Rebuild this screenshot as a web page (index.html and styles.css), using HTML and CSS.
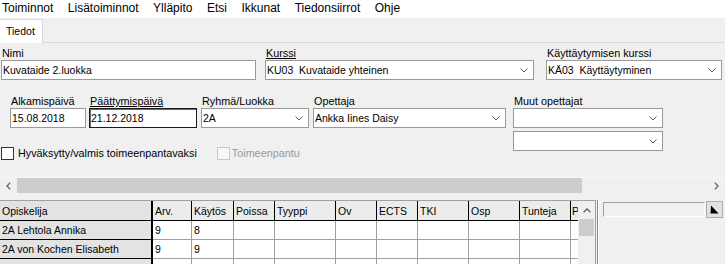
FILE: index.html
```html
<!DOCTYPE html>
<html>
<head>
<meta charset="utf-8">
<link rel="stylesheet" href="styles.css">
</head>
<body>
<div class="menubar">
  <span>Toiminnot</span><span>Lisätoiminnot</span><span>Ylläpito</span><span>Etsi</span><span>Ikkunat</span><span>Tiedonsiirrot</span><span>Ohje</span>
</div>
<div class="tabbar">
  <div class="tab">Tiedot</div>
  <div class="tabfill"></div>
</div>
<div class="form">
  <div class="row1">
    <div class="field f-nimi">
      <div class="lbl">Nimi</div>
      <div class="input">Kuvataide 2.luokka</div>
    </div>
    <div class="field f-kurssi">
      <div class="lbl"><u>Kurssi</u></div>
      <div class="combo"><span class="ctext">KU03  Kuvataide yhteinen</span><svg class="chev" width="8" height="5" viewBox="0 0 8 5"><path d="M0.5 0.5 L4 4 L7.5 0.5" fill="none" stroke="#5a5a5a" stroke-width="1"/></svg></div>
    </div>
    <div class="field f-kay">
      <div class="lbl">Käyttäytymisen kurssi</div>
      <div class="combo"><span class="ctext">KÄ03  Käyttäytyminen</span><svg class="chev" width="8" height="5" viewBox="0 0 8 5"><path d="M0.5 0.5 L4 4 L7.5 0.5" fill="none" stroke="#5a5a5a" stroke-width="1"/></svg></div>
    </div>
  </div>
  <div class="row2">
    <div class="left">
      <div class="fields">
        <div class="field f-alk">
          <div class="lbl">Alkamispäivä</div>
          <div class="input">15.08.2018</div>
        </div>
        <div class="field f-paat">
          <div class="lbl"><u>Päättymispäivä</u></div>
          <div class="input focus">21.12.2018</div>
        </div>
        <div class="field f-ryh">
          <div class="lbl">Ryhmä/Luokka</div>
          <div class="combo"><span class="ctext">2A</span><svg class="chev" width="8" height="5" viewBox="0 0 8 5"><path d="M0.5 0.5 L4 4 L7.5 0.5" fill="none" stroke="#5a5a5a" stroke-width="1"/></svg></div>
        </div>
        <div class="field f-ope">
          <div class="lbl">Opettaja</div>
          <div class="combo"><span class="ctext">Ankka Iines Daisy</span><svg class="chev" width="8" height="5" viewBox="0 0 8 5"><path d="M0.5 0.5 L4 4 L7.5 0.5" fill="none" stroke="#5a5a5a" stroke-width="1"/></svg></div>
        </div>
      </div>
      <div class="checks">
        <span class="cb"></span><span class="cbl">Hyväksytty/valmis toimeenpantavaksi</span>
        <span class="cb dis"></span><span class="cbl dis">Toimeenpantu</span>
      </div>
    </div>
    <div class="field f-muut">
      <div class="lbl">Muut opettajat</div>
      <div class="combo"><span class="ctext"></span><svg class="chev" width="8" height="5" viewBox="0 0 8 5"><path d="M0.5 0.5 L4 4 L7.5 0.5" fill="none" stroke="#5a5a5a" stroke-width="1"/></svg></div>
      <div class="combo second"><span class="ctext"></span><svg class="chev" width="8" height="5" viewBox="0 0 8 5"><path d="M0.5 0.5 L4 4 L7.5 0.5" fill="none" stroke="#5a5a5a" stroke-width="1"/></svg></div>
    </div>
  </div>
</div>
<div class="hscroll">
  <div class="sarrow"><svg width="5" height="8" viewBox="0 0 5 8"><path d="M4.2 0.6 L1 4 L4.2 7.4" fill="none" stroke="#606060" stroke-width="1.3"/></svg></div>
  <div class="hthumb"></div>
  <div class="htrack"></div>
  <div class="sarrow"><svg width="5" height="8" viewBox="0 0 5 8"><path d="M0.8 0.6 L4 4 L0.8 7.4" fill="none" stroke="#606060" stroke-width="1.3"/></svg></div>
</div>
<div class="gridarea">
  <div class="grid">
    <div class="table">
      <div class="c h fx">Opiskelija</div>
      <div class="c h">Arv.</div>
      <div class="c h">Käytös</div>
      <div class="c h">Poissa</div>
      <div class="c h">Tyyppi</div>
      <div class="c h">Ov</div>
      <div class="c h">ECTS</div>
      <div class="c h">TKI</div>
      <div class="c h">Osp</div>
      <div class="c h">Tunteja</div>
      <div class="c h last">P</div>

      <div class="c fx">2A Lehtola Annika</div>
      <div class="c">9</div>
      <div class="c">8</div>
      <div class="c"></div>
      <div class="c"></div>
      <div class="c"></div>
      <div class="c"></div>
      <div class="c"></div>
      <div class="c"></div>
      <div class="c"></div>
      <div class="c last"></div>

      <div class="c fx">2A von Kochen Elisabeth</div>
      <div class="c">9</div>
      <div class="c">9</div>
      <div class="c"></div>
      <div class="c"></div>
      <div class="c"></div>
      <div class="c"></div>
      <div class="c"></div>
      <div class="c"></div>
      <div class="c"></div>
      <div class="c last"></div>

      <div class="c fx"></div>
      <div class="c"></div>
      <div class="c"></div>
      <div class="c"></div>
      <div class="c"></div>
      <div class="c"></div>
      <div class="c"></div>
      <div class="c"></div>
      <div class="c"></div>
      <div class="c"></div>
      <div class="c last"></div>
    </div>
    <div class="vscroll">
      <div class="varrow"><svg width="8" height="5" viewBox="0 0 8 5"><path d="M0.6 4.2 L4 1 L7.4 4.2" fill="none" stroke="#606060" stroke-width="1.3"/></svg></div>
      <div class="vthumb"></div>
    </div>
  </div>
  <div class="splitter"></div>
  <div class="side">
    <div class="sinput"></div>
    <div class="sbtn"><svg width="9" height="9" viewBox="0 0 9 9"><polygon points="1,0.5 8.5,8.5 0.5,8.5" fill="#000"/></svg></div>
  </div>
</div>
</body>
</html>
```
FILE: styles.css
```css
* { box-sizing: border-box; }

body {
  margin: 0;
  width: 725px;
  height: 264px;
  overflow: hidden;
  background: #f0f0f0;
  color: #000;
  font-family: "Liberation Sans", Arial, sans-serif;
  font-size: 10.5px;
}

.menubar {
  height: 18px;
  background: #fff;
  display: flex;
  gap: 14.5px;
  padding-left: 2px;
  font-size: 12px;
  line-height: 16px;
  white-space: nowrap;
}

.tabbar {
  height: 25px;
  display: flex;
  align-items: flex-end;
}
.tab {
  height: 24px;
  background: #fff;
  border-top: 1px solid #d9d9d9;
  border-right: 1px solid #d9d9d9;
  padding: 0 7px 0 6px;
  line-height: 23px;
}
.tabfill {
  flex: 1;
  height: 25px;
  border-bottom: 1px solid #d9d9d9;
}

.form { padding-top: 4px; }

.row1 { display: flex; padding-left: 1px; }
.field { display: flex; flex-direction: column; }
.lbl {
  height: 13px;
  line-height: 13px;
  padding-left: 1px;
  white-space: nowrap;
  font-size: 10.8px;
}
.input, .combo {
  height: 20px;
  background: #fff;
  border: 1px solid #9a9a9a;
  padding: 1px 0 0 1px;
  line-height: 17px;
  white-space: pre;
}
.input.focus { border-color: #1a1a1a; box-shadow: inset 1px 1px 0 #6a6a6a; }
.combo { display: flex; align-items: center; padding: 0 5px 0 1px; }
.ctext { flex: 1; line-height: 18px; }
.chev { flex: none; }
.combo.second { margin-top: 3px; }

.f-nimi { width: 255px; }
.f-kurssi { width: 269px; margin-left: 9px; }
.f-kay { width: 176px; margin-left: 12px; }

.row2 { display: flex; margin-top: 15px; }
.left { display: flex; flex-direction: column; width: 506px; }
.fields { display: flex; padding-left: 10px; }
.f-alk { width: 76px; }
.f-paat { width: 108px; margin-left: 3px; }
.f-ryh { width: 108px; margin-left: 4px; }
.f-ope { width: 193px; margin-left: 4px; }
.f-muut { width: 150px; margin-left: 7px; }

.checks {
  display: flex;
  align-items: center;
  height: 13px;
  margin-top: 19px;
  line-height: 13px;
  white-space: nowrap;
  font-size: 10.8px;
}
.cb {
  width: 13px;
  height: 13px;
  margin-left: 1px;
  background: #fff;
  border: 1px solid #333;
  flex: none;
}
.cbl { margin-left: 4px; }
.cb.dis { margin-left: 20px; border-color: #c8c8c8; background: #f8f8f8; }
.cbl.dis { margin-left: 2px; color: #9a9a9a; }

.hscroll {
  margin-top: 17px;
  height: 17px;
  display: flex;
  background: #f0f0f0;
  border-top: 1px solid #f8f8f8;
}
.sarrow {
  width: 17px;
  display: flex;
  align-items: center;
  justify-content: center;
  flex: none;
}
.hthumb {
  width: 565px;
  margin: 0 0 1px;
  background: #cdcdcd;
}
.htrack { flex: 1; }

.gridarea {
  margin-top: 6px;
  height: 64px;
  display: flex;
}
.grid {
  width: 595px;
  display: flex;
  border-top: 1px solid #a0a0a0;
  overflow: hidden;
}
.table {
  width: 578px;
  display: grid;
  grid-template-columns: 153px 39px 42px 41px 61px 41px 41px 51px 51px 51px 7px;
  grid-template-rows: 20px 19px 19px 19px;
  overflow: hidden;
}
.c {
  background: #fff;
  border-right: 1px solid #a0a0a0;
  border-bottom: 1px solid #a0a0a0;
  padding-left: 2px;
  line-height: 18px;
  white-space: nowrap;
  overflow: hidden;
}
.c.h {
  background: #ececec;
  border-right-color: #000;
  border-bottom-color: #000;
  padding-top: 1px;
}
.c.fx {
  background: #e3e3e3;
  border-right: 2px solid #000;
  border-bottom-color: #000;
}
.c.last { border-right: none; padding-left: 1px; }

.vscroll {
  width: 17px;
  background: #f0f0f0;
  display: flex;
  flex-direction: column;
  align-items: center;
}
.varrow {
  height: 18px;
  width: 17px;
  display: flex;
  align-items: center;
  justify-content: center;
}
.vthumb {
  width: 15px;
  height: 17px;
  background: #cdcdcd;
}

.splitter {
  width: 5px;
  background: linear-gradient(to right, #a0a0a0 0 1px, #f0f0f0 1px 2px, #8a8a8a 2px 3px, #fff 3px 4px, #f0f0f0 4px);
}

.side {
  flex: 1;
  display: flex;
  align-items: flex-start;
  padding: 1px 0 0 3px;
}
.sinput {
  width: 102px;
  height: 15px;
  margin-top: 1px;
  border-top: 1px solid #a0a0a0;
  border-left: 1px solid #a0a0a0;
  border-right: 1px solid #fff;
  border-bottom: 1px solid #fff;
}
.sbtn {
  width: 17px;
  height: 17px;
  margin-left: 1px;
  background: #e1e1e1;
  border: 1px solid #adadad;
  display: flex;
  align-items: center;
  justify-content: center;
}
```
